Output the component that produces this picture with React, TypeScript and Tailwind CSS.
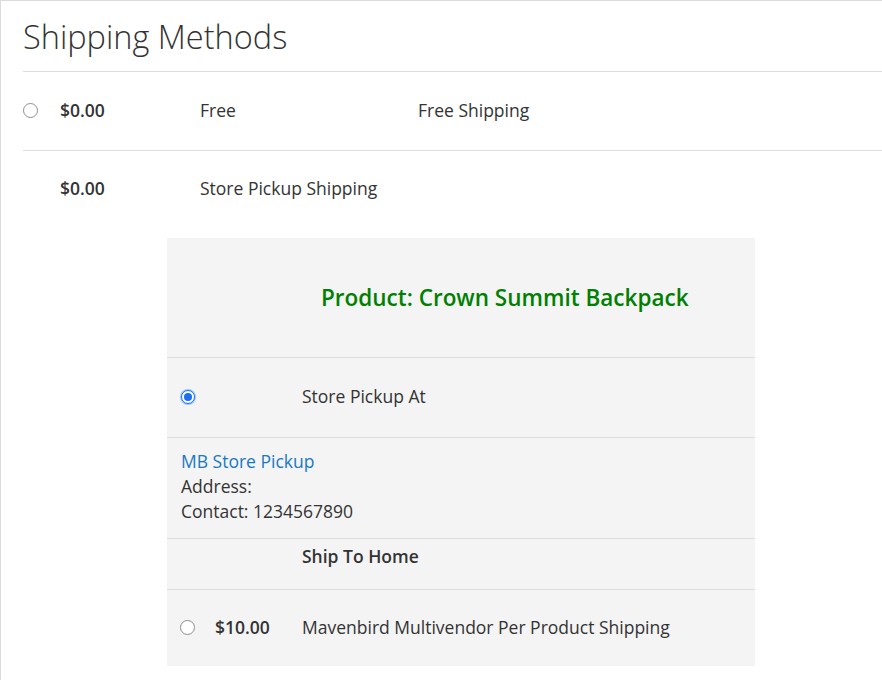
import React from "react";

const font = { fontFamily: '"Open Sans", "Noto Sans", sans-serif' };

function Radio({ checked }: { checked?: boolean }) {
  if (checked) {
    return (
      <span className="flex h-[16px] w-[16px] items-center justify-center rounded-full bg-[#9cc3fb]">
        <span className="flex h-[14px] w-[14px] items-center justify-center rounded-full border-[1.5px] border-[#1a73ff] bg-white">
          <span className="h-[8px] w-[8px] rounded-full bg-[#1a6ef5]" />
        </span>
      </span>
    );
  }
  return <span className="block h-[15px] w-[15px] rounded-full border-[1.5px] border-[#8f8f8f] bg-white" />;
}

export default function App() {
  return (
    <div
      className="h-[680px] w-[882px] overflow-hidden border-l border-t border-[#dcdcdc] bg-white text-[17.5px] text-[#333]"
      style={font}
    >
      <div className="ml-[22px] flex h-[71px] items-center border-b border-[#ddd] pt-[3px]">
        <h1 className="text-[32.5px] font-light leading-none text-[#333]">Shipping Methods</h1>
      </div>

      <div className="ml-[22px] flex h-[79px] items-center border-b border-[#ddd] pb-[1px]">
        <div className="w-[37px]">
          <Radio />
        </div>
        <div className="w-[140px] font-semibold">$0.00</div>
        <div className="w-[218px]">Free</div>
        <div>Free Shipping</div>
      </div>

      <div className="ml-[22px] flex h-[75px] items-center">
        <div className="w-[37px]" />
        <div className="w-[140px] font-semibold">$0.00</div>
        <div>Store Pickup Shipping</div>
      </div>

      <div className="ml-[166px] mt-[12px] w-[588px] bg-[#f4f4f4]">
        <div className="flex h-[120px] items-center border-b border-[#ddd] pl-[154px]">
          <span className="text-[22.5px] font-semibold text-[#008000]">Product: Crown Summit Backpack</span>
        </div>

        <div className="flex h-[80px] items-center border-b border-[#ddd] pb-[2px]">
          <div className="w-[135px] pl-[13px]">
            <Radio checked />
          </div>
          <div>Store Pickup At</div>
        </div>

        <div className="h-[101px] border-b border-[#ddd] pl-[14px] pt-[11px] leading-[25px]">
          <div className="text-[#1979c3]">MB Store Pickup</div>
          <div>Address:</div>
          <div>Contact: 1234567890</div>
        </div>

        <div className="h-[51px] border-b border-[#ddd] pl-[135px] pt-[5px] leading-[25px] font-semibold">
          Ship To Home
        </div>

        <div className="flex h-[76px] items-center pb-[1px]">
          <div className="w-[48px] pl-[13px]">
            <Radio />
          </div>
          <div className="w-[87px] font-semibold">$10.00</div>
          <div>Mavenbird Multivendor Per Product Shipping</div>
        </div>
      </div>
    </div>
  );
}
